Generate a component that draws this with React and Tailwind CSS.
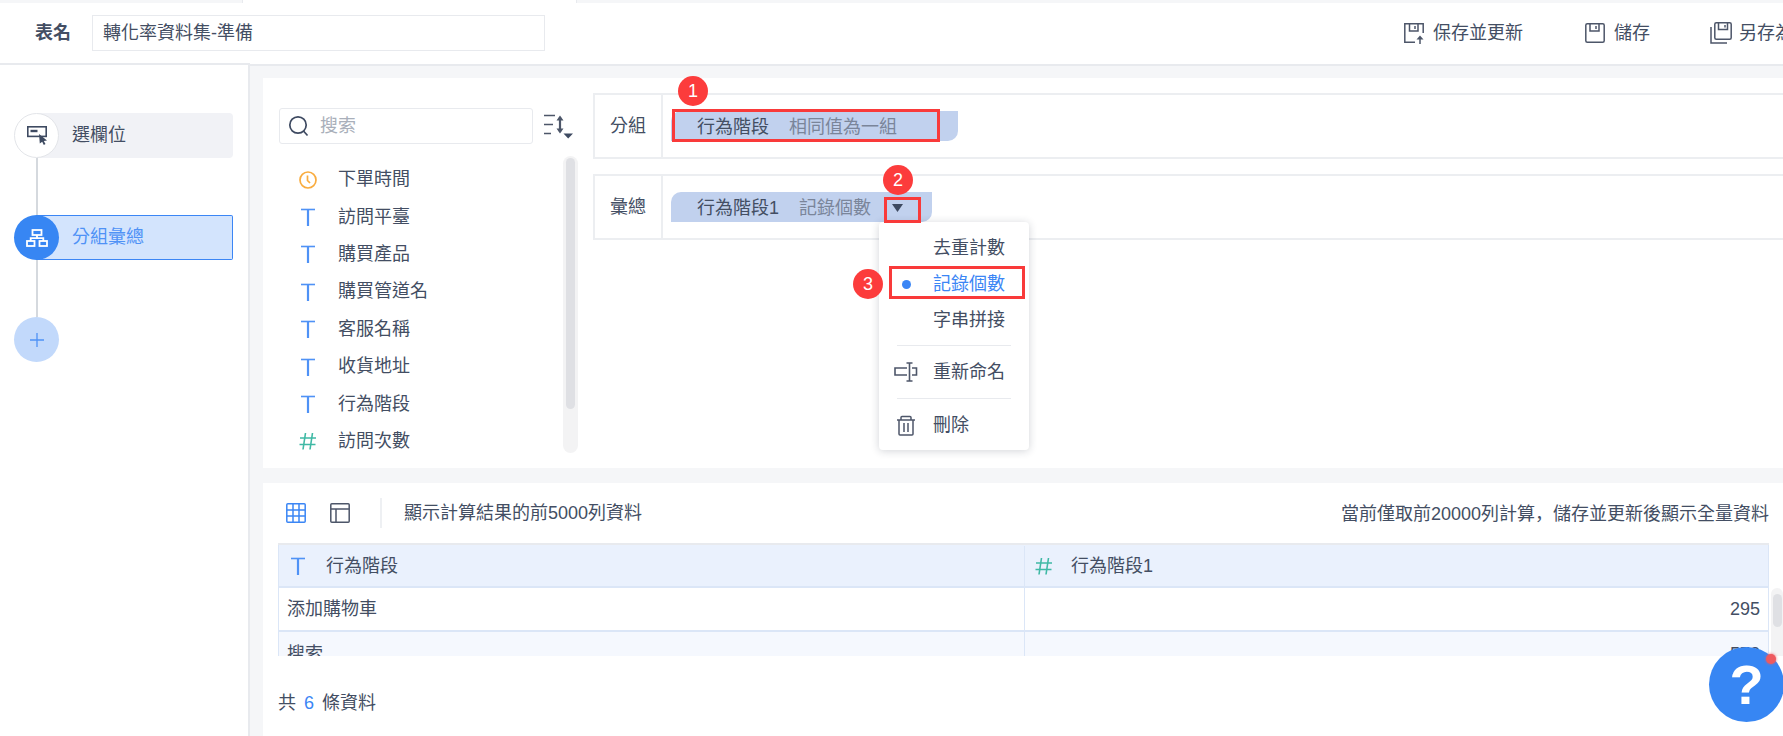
import React from 'react';

const fields = [
  { type: 'time', name: '下單時間' },
  { type: 'text', name: '訪問平臺' },
  { type: 'text', name: '購買產品' },
  { type: 'text', name: '購買管道名' },
  { type: 'text', name: '客服名稱' },
  { type: 'text', name: '收貨地址' },
  { type: 'text', name: '行為階段' },
  { type: 'num', name: '訪問次數' },
];

function TextIcon() {
  return (
    <svg width="18" height="18" viewBox="0 0 18 18" fill="none" stroke="#4f92f6">
      <path d="M2 1.5H16" strokeWidth="1.6" />
      <path d="M9 1.5V18" strokeWidth="2.2" />
    </svg>
  );
}

function NumIcon() {
  return (
    <svg width="18" height="18" viewBox="0 0 18 18" fill="none" stroke="#3fb9a5" strokeWidth="1.6">
      <path d="M6.5 1L4 17.5M13.5 1L11 17.5M1 6H17M0.5 12.5H16.5" />
    </svg>
  );
}

function ClockIcon() {
  return (
    <svg width="18" height="18" viewBox="0 0 18 18" fill="none" stroke="#f9ac3f" strokeWidth="1.7">
      <circle cx="9" cy="9" r="8" />
      <path d="M8.5 4.5V9.5L11 12" />
    </svg>
  );
}

function FieldIcon({ type }) {
  if (type === 'time') return <ClockIcon />;
  if (type === 'num') return <NumIcon />;
  return <TextIcon />;
}

function SaveIcon() {
  return (
    <svg width="20" height="20" viewBox="0 0 20 20" fill="none" stroke="#4d5669" strokeWidth="1.5">
      <rect x="0.8" y="0.8" width="18.4" height="18.4" rx="1.5" />
      <path d="M5 1V8H14V1M11 3V6" />
    </svg>
  );
}

function SaveUpdateIcon() {
  return (
    <svg width="21" height="21" viewBox="0 0 21 21" fill="none" stroke="#4d5669" strokeWidth="1.5">
      <path d="M11 19.2H0.8V0.8H19.2V10" />
      <path d="M5.5 1V8H14V1M11 3V6" />
      <path d="M16 14V21" />
      <path d="M12.5 16.5L16 12.5L19.5 16.5Z" fill="#4d5669" stroke="none" />
    </svg>
  );
}

function SaveAsIcon() {
  return (
    <svg width="22" height="22" viewBox="0 0 22 22" fill="none" stroke="#4d5669" strokeWidth="1.5">
      <rect x="4.8" y="0.8" width="16.4" height="16.4" rx="1.5" />
      <path d="M8.5 1V7.5H17.5V1M15 3V5.5" />
      <path d="M1 5V21H17" />
    </svg>
  );
}

function SelectIcon() {
  return (
    <svg width="20" height="19" viewBox="0 0 20 19" fill="none">
      <rect x="0.8" y="0.8" width="18.4" height="9.6" stroke="#3e4a61" strokeWidth="1.6" />
      <path d="M3.5 5H10.5" stroke="#3e4a61" strokeWidth="2.4" />
      <path d="M12 8L20 14.5L16.8 15L18.5 18L16.8 19L15.2 15.8L12.8 17.5Z" fill="#3e4a61" />
    </svg>
  );
}

function GroupIcon() {
  return (
    <svg width="22" height="18" viewBox="0 0 22 18" fill="none" stroke="#fff" strokeWidth="1.8">
      <rect x="6.5" y="1" width="9" height="5" />
      <rect x="1" y="12" width="7.5" height="5" />
      <rect x="13.5" y="12" width="7.5" height="5" />
      <path d="M11 6V9.2M4.7 12V9.2H17.3V12" />
    </svg>
  );
}

function RenameIcon() {
  return (
    <svg width="24" height="20" viewBox="0 0 24 20" fill="none" stroke="#4d5669" strokeWidth="1.6">
      <path d="M13 6H1V13H13M18 6H22.5V13H18" />
      <path d="M15.5 1V19M12.5 1H18.5M12.5 19H18.5" />
    </svg>
  );
}

function TrashIcon() {
  return (
    <svg width="20" height="21" viewBox="0 0 20 21" fill="none" stroke="#4d5669" strokeWidth="1.5">
      <path d="M1 5H19M5 5V2.5Q5 1.5 6 1.5H14Q15 1.5 15 2.5V5M3 5V19Q3 20 4 20H16Q17 20 17 19V5M8 8V17M12 8V17" />
    </svg>
  );
}

function Badge({ className, children }) {
  return (
    <div className={`absolute flex h-[30px] w-[30px] items-center justify-center rounded-full bg-[#fc3c3c] text-[18px] text-white ${className}`}>
      {children}
    </div>
  );
}

function MenuItem({ icon, active, children }) {
  return (
    <div className="flex h-[36px] items-center pl-[15px]">
      <span className="flex w-[24px] justify-center">{icon}</span>
      <span className={`ml-[15px] ${active ? 'text-[#3b86f5]' : ''}`}>{children}</span>
    </div>
  );
}

export default function App() {
  return (
    <div className="relative flex h-[736px] w-[1783px] flex-col overflow-hidden bg-white font-['Liberation_Sans','Noto_Sans_CJK_TC',sans-serif] text-[18px] text-[#434e63]">
      {/* top strip */}
      <div className="flex h-[3px] shrink-0">
        <div className="w-[243px] border-r border-[#e8eaee] bg-[#f5f6f8]" />
        <div className="w-[333px]" />
        <div className="flex-1 border-l border-[#e8eaee] bg-[#f5f6f8]" />
      </div>

      {/* header */}
      <div className="flex h-[60px] shrink-0 items-center pl-[35px] whitespace-nowrap">
        <span className="w-[57px] shrink-0 font-bold">表名</span>
        <div className="flex h-[36px] w-[453px] shrink-0 items-center border border-[#e8eaee] pl-[10px]">轉化率資料集-準備</div>
        <div className="ml-[859px] flex shrink-0 items-center">
          <SaveUpdateIcon />
          <span className="ml-[8px]">保存並更新</span>
        </div>
        <div className="ml-[62px] flex shrink-0 items-center">
          <SaveIcon />
          <span className="ml-[9px]">儲存</span>
        </div>
        <div className="ml-[60px] flex shrink-0 items-center">
          <SaveAsIcon />
          <span className="ml-[7px]">另存為</span>
        </div>
      </div>

      <div className="flex min-h-0 flex-1">
        {/* step sidebar */}
        <div className="w-[250px] shrink-0 border-t-2 border-r-2 border-[#e8eaee] pt-[48px] pl-[14px]">
          <div className="flex h-[45px] items-center">
            <div className="relative flex h-[45px] w-[45px] shrink-0 items-center justify-center rounded-full border border-[#e3e5e9] bg-white">
              <SelectIcon />
            </div>
            <div className="-ml-[22px] flex h-[45px] w-[196px] items-center rounded-r-[4px] bg-[#f1f2f6] pl-[35px]">選欄位</div>
          </div>
          <div className="ml-[21.5px] h-[57px] w-[2px] bg-[#d5d9de]" />
          <div className="flex h-[45px] items-center">
            <div className="relative flex h-[45px] w-[45px] shrink-0 items-center justify-center rounded-full bg-[#3786f3]">
              <GroupIcon />
            </div>
            <div className="-ml-[22px] flex h-[45px] w-[196px] items-center rounded-r-[2px] border border-l-0 border-[#3b86f5] bg-[#d3e4fd] pl-[35px] text-[#4f92f6]">分組彙總</div>
          </div>
          <div className="ml-[21.5px] h-[57px] w-[2px] bg-[#d5d9de]" />
          <div className="flex h-[45px] w-[45px] items-center justify-center rounded-full bg-[#c2d9fb]">
            <svg width="14" height="14" viewBox="0 0 14 14" stroke="#4f92f6" strokeWidth="1.3">
              <path d="M7 0V14M0 7H14" />
            </svg>
          </div>
        </div>

        {/* main */}
        <div className="mt-px flex min-w-0 flex-1 flex-col border-t-2 border-[#e8eaee] bg-[#f5f6f8] pt-[12px] pl-[13px]">
          <div className="flex h-[390px] shrink-0 bg-white">
            {/* field list */}
            <div className="w-[330px] shrink-0 pt-[30px] pl-[16px]">
              <div className="flex items-center">
                <div className="flex h-[36px] w-[254px] items-center rounded-[3px] border border-[#e8eaee] pl-[8px] text-[#a9afba]">
                  <svg width="22" height="22" viewBox="0 0 22 22" fill="none" stroke="#3e4a61" strokeWidth="1.7">
                    <circle cx="10" cy="10" r="8.2" />
                    <path d="M15.5 16L19.5 20.5" />
                  </svg>
                  <span className="ml-[10px]">搜索</span>
                </div>
                <svg className="ml-[11px]" width="29" height="25" viewBox="0 0 29 25" fill="none" stroke="#4d5669" strokeWidth="1.7">
                  <path d="M0 1.5H11M0 10.5H9M0 19.5H7" />
                  <path d="M16 3V18" strokeWidth="2.2" />
                  <path d="M12.5 6.5L16 1.5L19.5 6.5Z M12.5 14.5L16 19.5L19.5 14.5Z" fill="#4d5669" stroke="none" />
                  <path d="M19.5 19.5H29L24.2 24.5Z" fill="#3e4a61" stroke="none" />
                </svg>
              </div>
              <div className="mt-[12px] flex">
                <div className="w-[284px] pt-[5px]">
                  {fields.map((f) => (
                    <div key={f.name} className="flex h-[37.4px] items-center pl-[20px]">
                      <span className="flex w-[18px] justify-center">
                        <FieldIcon type={f.type} />
                      </span>
                      <span className="ml-[21px]">{f.name}</span>
                    </div>
                  ))}
                </div>
                <div className="h-[297px] w-[15px] rounded-full bg-[#f3f3f4] pt-[2px]">
                  <div className="mx-auto h-[251px] w-[9px] rounded-full bg-[#dfe0e4]" />
                </div>
              </div>
            </div>

            {/* group / summary boxes */}
            <div className="min-w-0 flex-1 pt-[15px]">
              <div className="flex h-[66px] border-2 border-r-0 border-[#eceef1]">
                <div className="flex w-[68px] items-center justify-center border-r-2 border-[#eceef1]">分組</div>
                <div className="pt-[16px] pl-[8px]">
                  <div className="flex h-[30px] items-center rounded-tl-[10px] rounded-br-[10px] bg-[#c1d1ee] pt-[2px] pr-[61px] pl-[26px]">
                    <span>行為階段</span>
                    <span className="ml-[20px] text-[#7a859a]">相同值為一組</span>
                  </div>
                </div>
              </div>
              <div className="mt-[15px] flex h-[66px] border-2 border-r-0 border-[#eceef1]">
                <div className="flex w-[68px] items-center justify-center border-r-2 border-[#eceef1]">彙總</div>
                <div className="pt-[16px] pl-[8px]">
                  <div className="flex h-[30px] items-center rounded-tl-[10px] rounded-br-[10px] bg-[#c1d1ee] pt-[2px] pr-[29px] pl-[26px]">
                    <span>行為階段1</span>
                    <span className="ml-[20px] text-[#7a859a]">記錄個數</span>
                    <svg className="ml-[21px]" width="11" height="8" viewBox="0 0 11 8">
                      <path d="M0 0H11L5.5 8Z" fill="#3e4a61" />
                    </svg>
                  </div>
                </div>
              </div>
            </div>
          </div>

          {/* preview */}
          <div className="mt-[15px] min-h-0 flex-1 bg-white">
            <div className="flex h-[60px] items-center whitespace-nowrap pr-[14px] pl-[23px]">
              <svg width="20" height="20" viewBox="0 0 20 20" fill="none" stroke="#3b86f5" strokeWidth="1.5">
                <rect x="0.8" y="0.8" width="18.4" height="18.4" rx="1" />
                <path d="M7 1V19M13 1V19M1 7H19M1 13H19" />
              </svg>
              <svg className="ml-[24px]" width="20" height="20" viewBox="0 0 20 20" fill="none" stroke="#4d5669" strokeWidth="1.5">
                <rect x="0.8" y="0.8" width="18.4" height="18.4" rx="1" />
                <path d="M1 6H19M6 6V19" />
              </svg>
              <div className="ml-[30px] h-[30px] w-[2px] bg-[#eef0f3]" />
              <span className="ml-[22px]">顯示計算結果的前5000列資料</span>
              <span className="ml-auto">
                當前僅取前20000列計算<span className="font-['Noto_Sans_CJK_SC',sans-serif]">，</span>儲存並更新後顯示全量資料
              </span>
            </div>
            <div className="flex h-[113px] gap-[2px] pl-[15px]">
              <div className="w-[1491px] shrink-0 overflow-hidden border-t-2 border-[#e8eaee]">
                <div className="border-x border-[#dbe6f7]">
                  <div className="grid h-[43px] grid-cols-[746px_1fr] border-b-2 border-[#dbe6f7] bg-[#eaf1fd] pt-[1px]">
                    <div className="flex items-center border-r border-[#dbe6f7] pl-[10px]">
                      <TextIcon />
                      <span className="ml-[19px]">行為階段</span>
                    </div>
                    <div className="flex items-center pl-[10px]">
                      <NumIcon />
                      <span className="ml-[18px]">行為階段1</span>
                    </div>
                  </div>
                  <div className="grid h-[44px] grid-cols-[746px_1fr] border-b-2 border-[#dbe6f7]">
                    <div className="flex items-center border-r border-[#dbe6f7] pl-[8px]">添加購物車</div>
                    <div className="flex items-center justify-end pr-[8px]">295</div>
                  </div>
                  <div className="grid h-[44px] grid-cols-[746px_1fr] bg-[#f5f8fe]">
                    <div className="flex items-center border-r border-[#dbe6f7] pl-[8px]">搜索</div>
                    <div className="flex items-center justify-end pr-[8px]">573</div>
                  </div>
                </div>
              </div>
              <div className="mt-[45px] h-[68px] w-[12px] shrink-0 rounded-t-[6px] bg-[#f3f3f4] pt-[6px]">
                <div className="mx-auto h-[33px] w-[9px] rounded-full bg-[#dfe0e4]" />
              </div>
            </div>
            <div className="flex h-[94px] items-center pl-[15px]">
              共<span className="mx-[8px] text-[#3b86f5]">6</span>條資料
            </div>
          </div>
        </div>
      </div>

      {/* dropdown menu */}
      <div className="absolute top-[222px] left-[879px] h-[228px] w-[150px] rounded-[4px] bg-white pt-[8px] shadow-[0_1px_8px_rgba(30,40,60,0.2)]">
        <MenuItem>去重計數</MenuItem>
        <MenuItem active icon={<span className="h-[9px] w-[9px] rounded-full bg-[#3b86f5]" />}>記錄個數</MenuItem>
        <MenuItem>字串拼接</MenuItem>
        <div className="mx-[18px] mt-[7px] mb-[8px] h-px bg-[#e8eaee]" />
        <MenuItem icon={<RenameIcon />}>重新命名</MenuItem>
        <div className="mx-[18px] mt-[8px] mb-[8px] h-px bg-[#e8eaee]" />
        <MenuItem icon={<TrashIcon />}>刪除</MenuItem>
      </div>

      {/* red annotations */}
      <div className="absolute top-[109px] left-[672px] h-[33px] w-[268px] border-[3px] border-[#f93a3a]" />
      <div className="absolute top-[197px] left-[884px] h-[26px] w-[37px] border-[3px] border-[#f93a3a]" />
      <div className="absolute top-[266px] left-[889px] h-[33px] w-[136px] border-[3px] border-[#f93a3a]" />
      <Badge className="top-[76px] left-[678px]">1</Badge>
      <Badge className="top-[165px] left-[883px]">2</Badge>
      <Badge className="top-[269px] left-[853px]">3</Badge>

      {/* help button */}
      <div className="absolute top-[647px] left-[1709px] flex h-[75px] w-[75px] items-center justify-center rounded-full bg-[#3786f3] text-[56px] leading-none font-bold text-white">?</div>
      <div className="absolute top-[654px] left-[1766px] h-[10px] w-[10px] rounded-full bg-[#ee5a5f] shadow-[0_0_3px_#ee5a5f]" />
    </div>
  );
}
